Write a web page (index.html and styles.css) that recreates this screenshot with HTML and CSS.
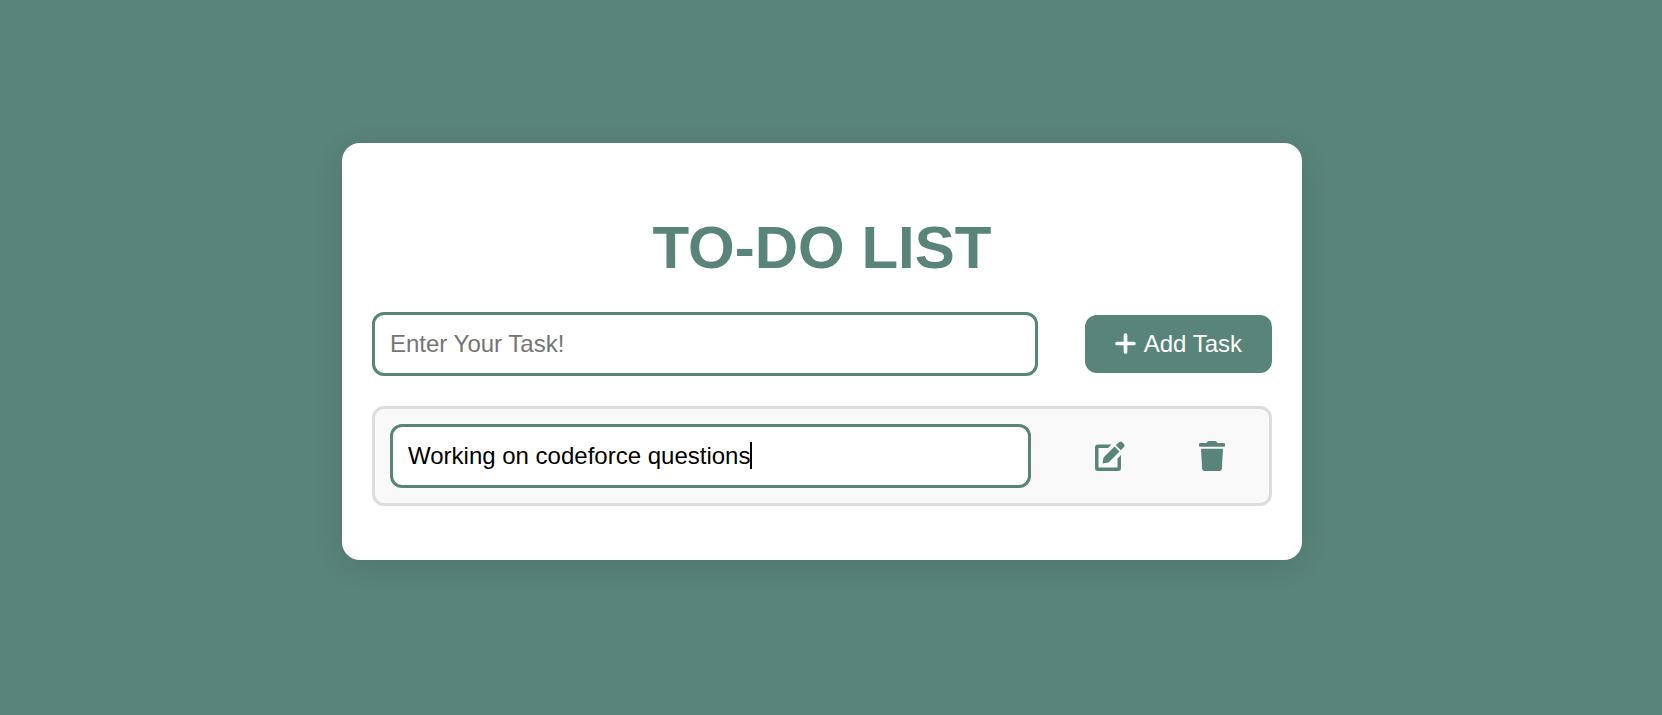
FILE: index.html
```html
<!DOCTYPE html>
<html lang="en">
<head>
<meta charset="utf-8">
<title>To-Do List</title>
<link rel="stylesheet" href="styles.css">
</head>
<body>
<main class="card">
  <h1 class="title">TO-DO LIST</h1>
  <form class="entry">
    <input class="field" type="text" placeholder="Enter Your Task!" aria-label="New task">
    <button class="add" type="button">
      <svg class="plus" viewBox="0 0 20 20" aria-hidden="true"><path d="M10 2V18M2 10H18"/></svg>
      Add Task
    </button>
  </form>
  <ul class="tasks">
    <li class="task">
      <div class="editor">
        <input class="field" type="text" value="Working on codeforce questions" aria-label="Edit task">
        <span class="caret" aria-hidden="true"><span class="caret-text">Working on codeforce questions</span></span>
      </div>
      <button class="action" type="button" aria-label="Edit">
        <svg class="icon" viewBox="0 0 30 30" aria-hidden="true"><path d="M16.500 3.500H3Q0 3.500 0 6.500V27Q0 30 3 30H23Q26 30 26 27V14L22.500 17.500V26.500H3.500V7H13ZM7.500 22.500L8.500 16.500L19.500 5.500L24.500 10.500L13.500 21.500ZM20.800 4.300L23.500 1.600Q25.500 -0.400 27.500 1.600L28.500 2.600Q30.500 4.600 28.500 6.600L25.800 9.300Z"/></svg>
      </button>
      <button class="action" type="button" aria-label="Delete">
        <svg class="icon trash" viewBox="0 0 26 30" aria-hidden="true"><path d="M1 2H7.500L8.300 0.800Q8.800 0 9.700 0H16.300Q17.200 0 17.700 0.800L18.500 2H25Q26 2 26 3V4.700Q26 5.700 25 5.700H1Q0 5.700 0 4.700V3Q0 2 1 2ZM2 7.700H24L22.900 27.500Q22.700 30 20.200 30H5.800Q3.300 30 3.100 27.500Z"/></svg>
      </button>
    </li>
  </ul>
</main>
</body>
</html>
```
FILE: styles.css
```css
* { box-sizing: border-box; }

body {
  margin: 0;
  min-height: 100vh;
  padding: 0 18px 13px 0;
  display: flex;
  align-items: center;
  justify-content: center;
  background: #598479;
  font-family: "Liberation Sans", Arial, sans-serif;
  font-size: 24px;
}

.card {
  width: 100%;
  max-width: 960px;
  padding: 70px 30px 54px;
  border-radius: 18px;
  background: #fff;
  box-shadow: 0 6px 30px rgba(0, 0, 0, 0.1);
}

.title {
  margin: 0 0 30px;
  color: #598479;
  font-size: 60px;
  line-height: 69px;
  text-align: center;
}

.entry {
  display: flex;
  align-items: center;
  gap: 47px;
  margin-bottom: 30px;
}

.field {
  flex: 1;
  width: 100%;
  min-width: 0;
  height: 64px;
  padding: 0 15px;
  border: 3px solid #598479;
  border-radius: 12px;
  outline: none;
  background: #fff;
  color: #000;
  font: inherit;
}

.field::placeholder { color: #757575; }

.add {
  display: flex;
  align-items: center;
  gap: 8px;
  height: 58px;
  padding: 0 30px;
  border: 0;
  border-radius: 12px;
  background: #598479;
  color: #fff;
  font: inherit;
}

.plus {
  width: 21px;
  height: 21px;
  fill: none;
  stroke: #fff;
  stroke-width: 3.5;
  stroke-linecap: round;
}

.tasks {
  margin: 0;
  padding: 0;
  list-style: none;
}

.task {
  display: flex;
  align-items: center;
  gap: 14px;
  padding: 15px 14px 15px 15px;
  border: 3px solid #ddd;
  border-radius: 12px;
  background: #f9f9f9;
}

.editor {
  position: relative;
  display: flex;
  flex: 1;
  margin-right: 20px;
}

.caret {
  position: absolute;
  top: 18px;
  left: 18px;
  height: 27px;
  border-right: 2px solid #000;
  pointer-events: none;
}

.caret-text { visibility: hidden; }

.action {
  display: flex;
  padding: 0 30px;
  border: 0;
  background: none;
  color: #598479;
}

.icon {
  width: 30px;
  height: 30px;
  fill: currentColor;
}

.trash { width: 26px; }
```
